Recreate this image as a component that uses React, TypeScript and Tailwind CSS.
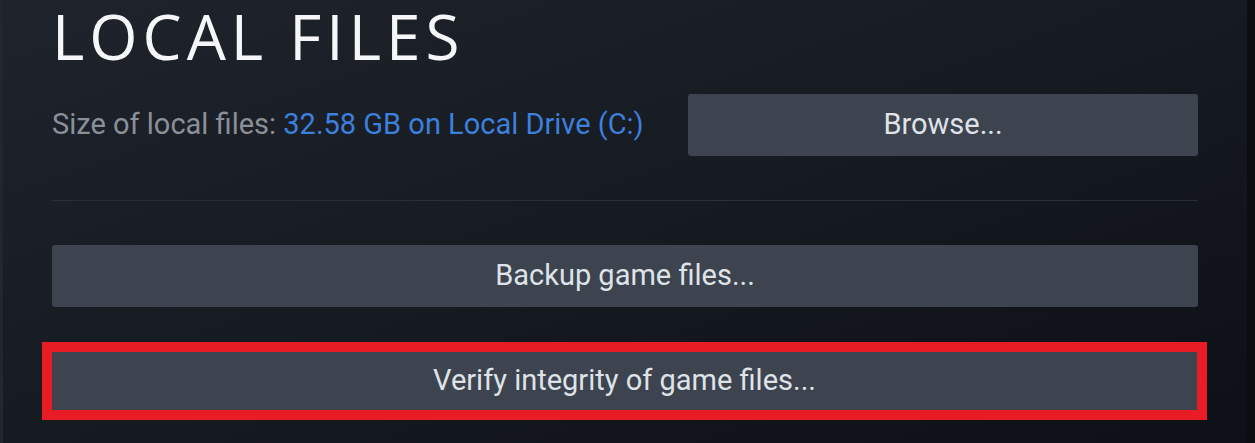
export default function App() {
  return (
    <div className="w-[1255px] h-[443px] overflow-hidden flex bg-gradient-to-br from-[#1f232b] via-[#161a21] to-[#0d1016] font-['Roboto',sans-serif]">
      <div className="w-[3px] bg-[#22262e]" />
      <div className="flex-1 flex flex-col pl-[49px] pr-[49px]">
        <h1 className="text-[62px] leading-[72px] font-normal tracking-[5px] text-[#f4f6f8] font-['Open_Sans',sans-serif]">
          LOCAL FILES
        </h1>

        <div className="mt-[22px] flex items-center h-[62px]">
          <div className="flex-1 text-[29px] text-[#8a9099] whitespace-nowrap">
            Size of local files: <span className="text-[#3d7fdc]">32.58 GB on Local Drive (C:)</span>
          </div>
          <button className="w-[510px] h-[62px] rounded-[3px] bg-[#3d434f] text-[29px] text-[#dfe3e8]">
            Browse...
          </button>
        </div>

        <div className="mt-[44px] h-px bg-[#2a2f38]" />

        <button className="mt-[44px] h-[62px] rounded-[3px] bg-[#3d434f] text-[29px] text-[#dfe3e8]">
          Backup game files...
        </button>

        <div className="mt-[35px] -ml-[10px] -mr-[9px] border-[10px] border-[#e81c24]">
          <button className="w-full h-[58px] bg-[#3d434f] text-[29px] text-[#dfe3e8]">
            Verify integrity of game files...
          </button>
        </div>
      </div>
      <div className="w-[8px] bg-[#0b0d11]" />
    </div>
  );
}
